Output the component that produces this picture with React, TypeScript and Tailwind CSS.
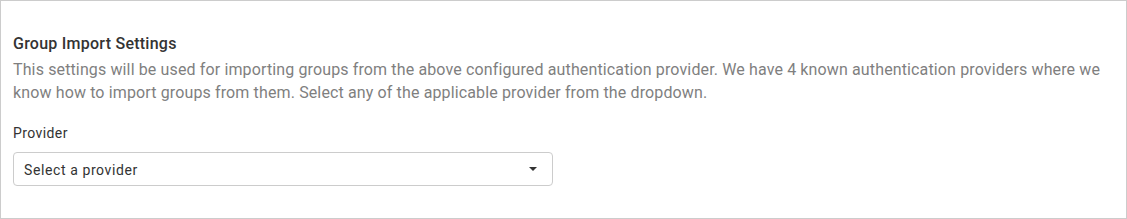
import React from "react";

export default function App() {
  return (
    <div
      className="w-[1127px] h-[219px] border border-[#cccccc] bg-white px-3 pt-[33px]"
      style={{ fontFamily: "Roboto, 'Liberation Sans', sans-serif" }}
    >
      <h2 className="text-[16px] font-medium leading-[20px] tracking-[0.25px] text-[#333333]">Group Import Settings</h2>
      <p className="mt-[4px] text-[16px] leading-[23px] tracking-[0.13px] text-[#7f7f7f]">
        This settings will be used for importing groups from the above configured authentication provider. We have 4 known authentication providers where we know how to import groups from them. Select any of the applicable provider from the dropdown.
      </p>
      <label className="mt-[21px] block text-[14px] leading-[16px] tracking-[0.4px] text-[#333333]">Provider</label>
      <div className="mt-[11px] flex h-[34px] w-[540px] items-center justify-between rounded-[4px] border border-[#cccccc] pl-[10px] pr-[15px]">
        <span className="pt-[2px] text-[14px] tracking-[0.6px] text-[#333333]">Select a provider</span>
        <svg width="8" height="4" viewBox="0 0 8 4">
          <path d="M0 0 H8 L4 4 Z" fill="#333333" />
        </svg>
      </div>
    </div>
  );
}
